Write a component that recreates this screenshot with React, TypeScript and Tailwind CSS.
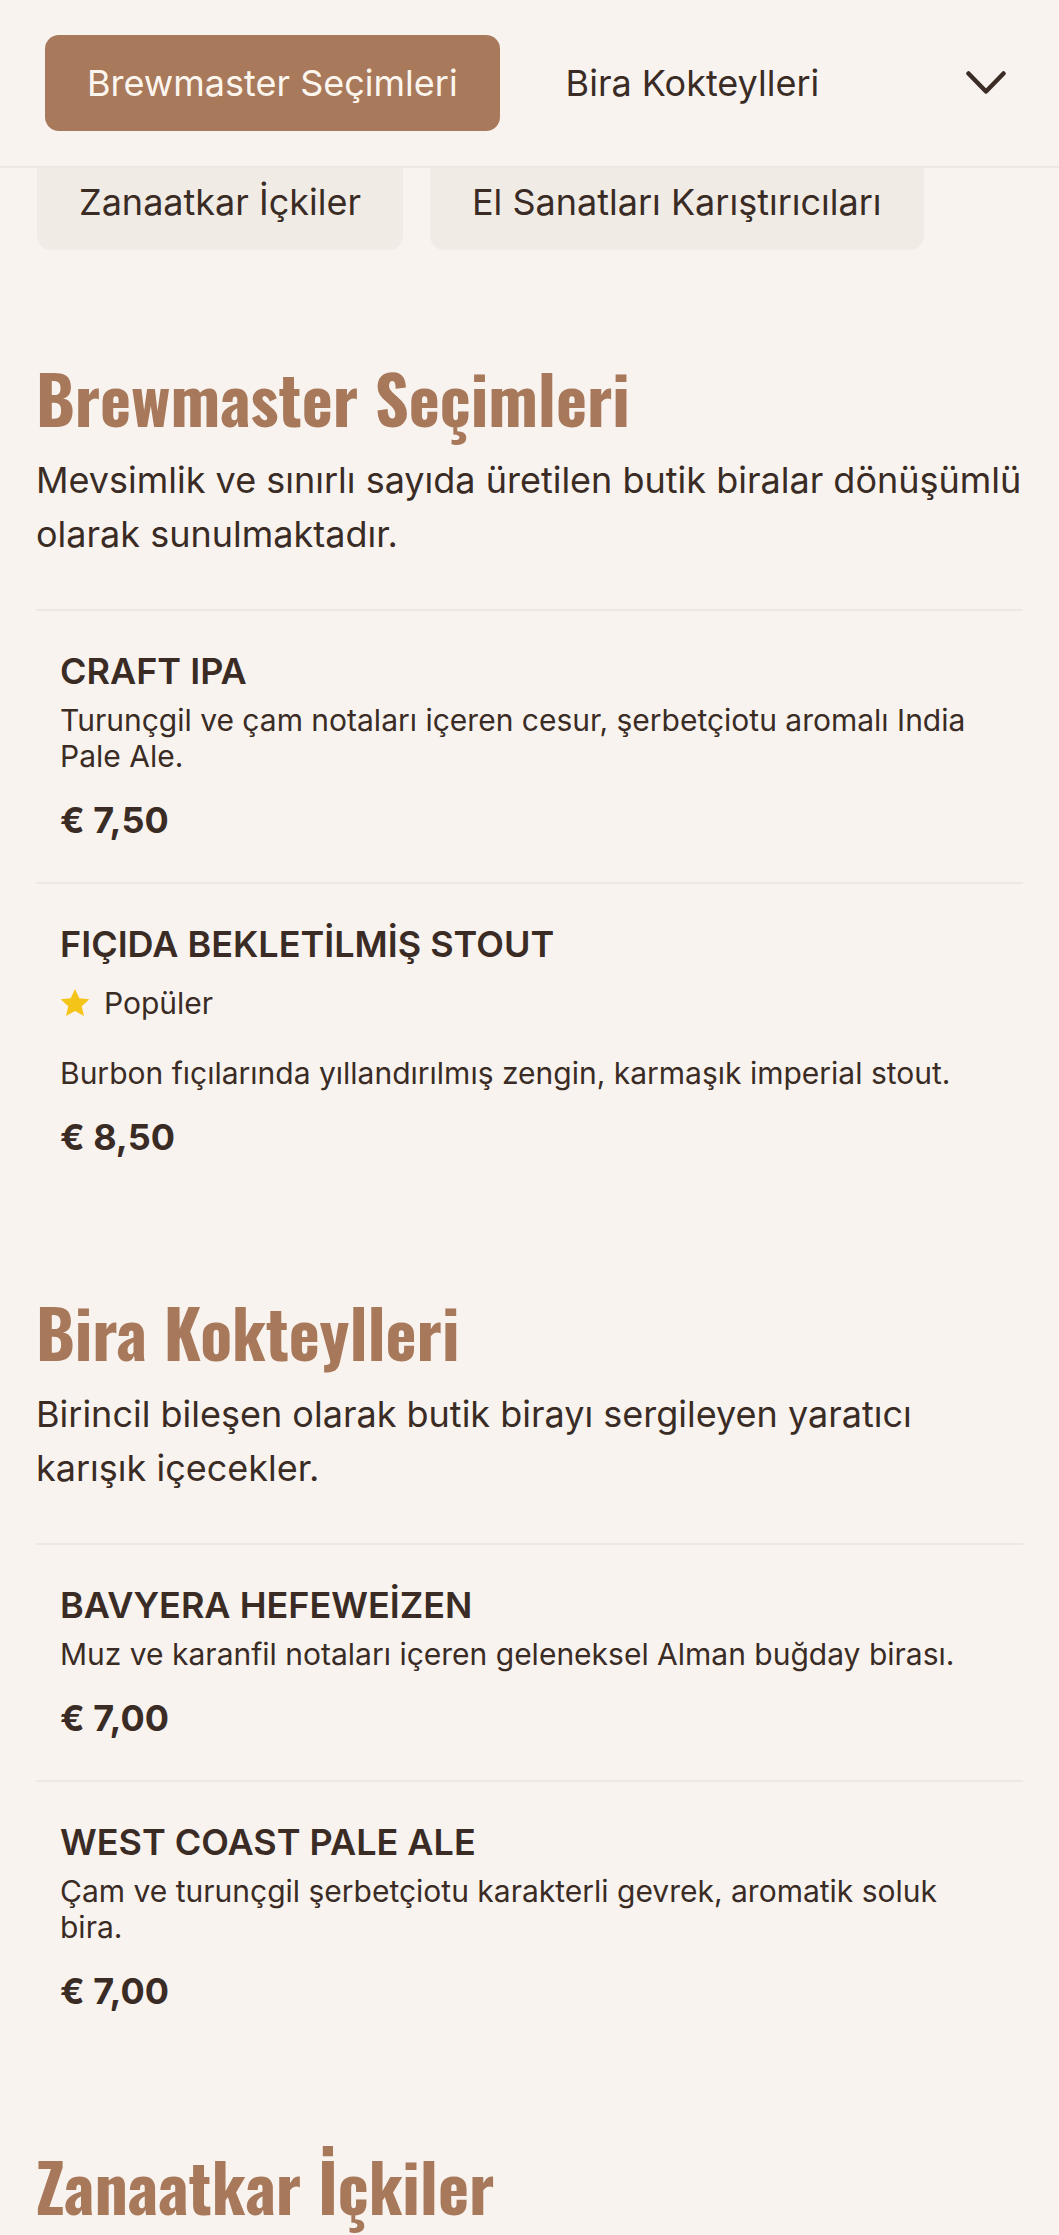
import React from "react";

type MenuItem = {
  name: string;
  description: string;
  price: string;
  popular?: boolean;
};

type Section = {
  id: string;
  title: string;
  intro: string;
  items: MenuItem[];
};

const sections: Section[] = [
  {
    id: "brewmaster",
    title: "Brewmaster Seçimleri",
    intro:
      "Mevsimlik ve sınırlı sayıda üretilen butik biralar dönüşümlü olarak sunulmaktadır.",
    items: [
      {
        name: "CRAFT IPA",
        description:
          "Turunçgil ve çam notaları içeren cesur, şerbetçiotu aromalı India Pale Ale.",
        price: "€ 7,50",
      },
      {
        name: "FIÇIDA BEKLETİLMİŞ STOUT",
        description:
          "Burbon fıçılarında yıllandırılmış zengin, karmaşık imperial stout.",
        price: "€ 8,50",
        popular: true,
      },
    ],
  },
  {
    id: "kokteyl",
    title: "Bira Kokteylleri",
    intro:
      "Birincil bileşen olarak butik birayı sergileyen yaratıcı karışık içecekler.",
    items: [
      {
        name: "BAVYERA HEFEWEİZEN",
        description: "Muz ve karanfil notaları içeren geleneksel Alman buğday birası.",
        price: "€ 7,00",
      },
      {
        name: "WEST COAST PALE ALE",
        description:
          "Çam ve turunçgil şerbetçiotu karakterli gevrek, aromatik soluk bira.",
        price: "€ 7,00",
      },
    ],
  },
  {
    id: "zanaatkar",
    title: "Zanaatkar İçkiler",
    intro: "Yerel üreticilerden özenle seçilmiş el yapımı içkiler.",
    items: [
      {
        name: "EL YAPIMI ELMA ŞARABI",
        description: "Yerel bahçelerden toplanan elmalarla hazırlanan kuru cider.",
        price: "€ 6,50",
      },
    ],
  },
  {
    id: "karistirici",
    title: "El Sanatları Karıştırıcıları",
    intro: "Evde hazırlanan şuruplar ve tonikler.",
    items: [
      {
        name: "ZENCEFİLLİ TONİK",
        description: "Taze zencefil ve limon kabuğu ile hazırlanmış ev yapımı tonik.",
        price: "€ 4,00",
      },
    ],
  },
];

const StarIcon = () => (
  <svg width="32" height="30" viewBox="0 0 24 23" className="shrink-0 -ml-[1px]">
    <path
      d="M12 0.8l3.3 7.1 7.7 0.8-5.8 5.2 1.7 7.6L12 17.6l-6.9 3.9 1.7-7.6L1 8.7l7.7-0.8z"
      fill="#f5c419"
    />
  </svg>
);

const Chevron = () => (
  <svg width="40" height="24" viewBox="0 0 40 24" fill="none">
    <polyline
      points="2.5,2.5 20,20.5 37.5,2.5"
      stroke="#3b2d26"
      strokeWidth="4.5"
      strokeLinecap="round"
      strokeLinejoin="round"
    />
  </svg>
);

const headingFont = {
  fontFamily: '"Oswald", "Liberation Sans Narrow", "DejaVu Sans Condensed", sans-serif',
};

function MenuRow({ item }: { item: MenuItem }) {
  return (
    <div className="border-t-2 border-[#efe8e2] pt-[38px] pb-[40px] pl-[24px] pr-[30px]">
      <h3 className="text-[36px] leading-[44px] font-semibold text-[#3a2c25]">
        {item.name}
      </h3>
      {item.popular && (
        <div className="mt-[19px] flex items-center gap-[13px]">
          <StarIcon />
          <span className="text-[30px] leading-[36px] text-[#3a2c25]">Popüler</span>
        </div>
      )}
      <p
        className={`${
          item.popular ? "mt-[34px]" : "mt-[9px]"
        } text-[30px] leading-[36px] text-[#3a2c25]`}
      >
        {item.description}
      </p>
      <p className="mt-[24px] text-[36px] leading-[44px] font-bold text-[#3a2c25]">
        {item.price}
      </p>
    </div>
  );
}

export default function App() {
  return (
    <div
      className="min-h-screen bg-[#f8f3ef] text-[#3a2c25]"
      style={{ fontFamily: '"Inter", "Noto Sans", sans-serif' }}
    >
      <header className="sticky top-0 z-10 h-[168px] bg-[#f8f3ef] border-b-2 border-[#efe8e2] flex items-center pl-[45px] pr-[53px]">
        <nav className="flex items-center gap-[24px]">
          <button className="rounded-[14px] bg-[#a8795b] px-[42px] py-[22px] text-[36px] leading-[52px] text-[#fdf6ef]">
            Brewmaster Seçimleri
          </button>
          <button className="px-[42px] py-[22px] text-[36px] leading-[52px] text-[#3a2c25]">
            Bira Kokteylleri
          </button>
        </nav>
        <button className="ml-auto flex items-center" aria-label="Daha fazla">
          <Chevron />
        </button>
      </header>

      <div className="relative z-0 -mt-[14px] flex gap-[27px] pl-[37px]">
        <button className="rounded-[14px] bg-[#f1ebe6] px-[42px] py-[22px] text-[36px] leading-[52px] text-[#3a2c25]">
          Zanaatkar İçkiler
        </button>
        <button className="rounded-[14px] bg-[#f1ebe6] px-[42px] py-[22px] text-[36px] leading-[52px] text-[#3a2c25]">
          El Sanatları Karıştırıcıları
        </button>
      </div>

      <main className="px-[36px] pt-[113px] pb-[120px] flex flex-col gap-[98px]">
        {sections.map((section) => (
          <section key={section.id} id={section.id}>
            <h2
              className="text-[66px] leading-[68px] font-bold text-[#a8785a]"
              style={headingFont}
            >
              {section.title}
            </h2>
            <p className="mt-[22px] -mr-[4px] text-[36px] leading-[54px] text-[#3a2c25]">
              {section.intro}
            </p>
            <div className="mt-[48px]">
              {section.items.map((item) => (
                <MenuRow key={item.name} item={item} />
              ))}
            </div>
          </section>
        ))}
      </main>
    </div>
  );
}
